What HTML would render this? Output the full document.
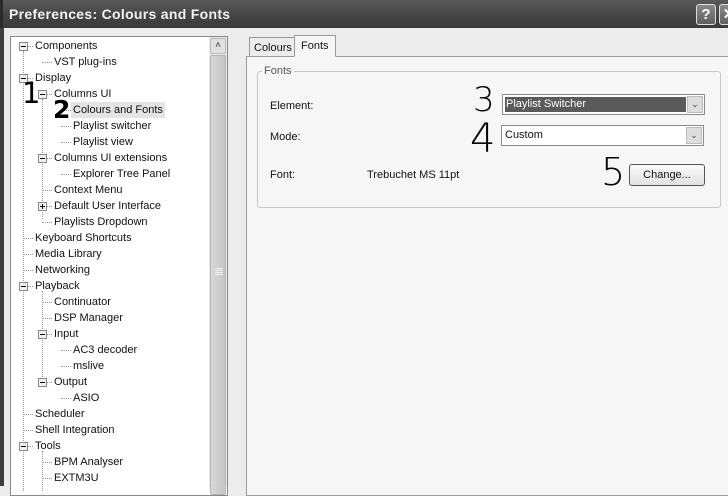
<!DOCTYPE html>
<html><head><meta charset="utf-8"><style>
*{box-sizing:border-box;margin:0;padding:0}
body{width:728px;height:486px;overflow:hidden;background:#ececec;font-family:"Liberation Sans",sans-serif;font-size:11px;color:#111;position:relative}
.title{position:absolute;left:0;top:0;width:728px;height:28px;background:linear-gradient(#5a5a5a,#434343 60%,#3a3a3a);border-left:3px solid #2a2a2a}
.title span{position:absolute;left:6px;top:6px;color:#f2f2f2;font-size:14px;font-weight:bold;letter-spacing:0.3px}
.tb{position:absolute;top:4px;width:20px;height:21px;border:1px solid #ddd;border-radius:3px;background:linear-gradient(#8a8a8a,#5f5f5f);color:#fff;font-weight:bold;font-size:15px;text-align:center;line-height:19px}
.lb{position:absolute;left:0;top:28px;width:4px;height:458px;background:#3e3e3e}
.tree{position:absolute;left:10px;top:36px;width:218px;height:460px;background:#fff;border:1px solid #8a8a8a}
.sb{position:absolute;left:209px;top:37px;width:18px;height:450px;background:#e8e8e8}
.sb .up{position:absolute;left:1px;top:1px;width:16px;height:16px;background:#e0e0e0;border:1px solid #bbb;border-radius:2px;font-size:10px;text-align:center;line-height:14px;color:#333}
.sb .th{position:absolute;left:1px;top:18px;width:16px;height:440px;background:linear-gradient(90deg,#d8d8d8,#c4c4c4);border:1px solid #b5b5b5;border-radius:2px}
.grip{position:absolute;left:4px;top:212px;width:8px;height:1px;background:#eee;box-shadow:0 2px #eee,0 4px #eee,0 6px #eee}
.it{position:absolute;height:16px;line-height:16px;white-space:nowrap}
.box{position:absolute;width:9px;height:9px;border:1px solid #888;background:#f0f0f0}
.box:after{content:"";position:absolute;left:1px;top:3px;width:5px;height:1px;background:#000}
.box.p:before{content:"";position:absolute;left:3px;top:1px;width:1px;height:5px;background:#000}
.vl{position:absolute;width:0;border-left:1px dotted #999}
.hl{position:absolute;height:0;border-top:1px dotted #999}
.panel{position:absolute;left:246px;top:56px;width:490px;height:440px;background:#f6f6f6;border:1px solid #9a9a9a}
.tab{position:absolute;height:20px;border:1px solid #9a9a9a;border-bottom:none;background:#ececec;padding:0 4px;line-height:20px;font-size:11px}
.grp{position:absolute;left:257px;top:71px;width:464px;height:137px;border:1px solid #c8c8c8;border-radius:3px}
.lbl{position:absolute;font-size:11px}
.cb{position:absolute;height:21px;border:1px solid #8a8a8a;background:#fff;line-height:19px;padding-left:3px;font-size:11px}
.arr{position:absolute;right:1px;top:1px;width:16px;height:17px;background:#ddd;border:1px solid #bbb;font-size:9px;text-align:center;line-height:15px;color:#444}
.btn{position:absolute;left:629px;top:164px;width:76px;height:22px;border:1px solid #555;border-radius:3px;background:linear-gradient(#fafafa,#e2e2e2);text-align:center;line-height:20px}
.hw{position:absolute;font-family:"DejaVu Sans",sans-serif;font-weight:200;color:#000}
</style></head><body>
<div class="title"><span>Preferences: Colours and Fonts</span></div>
<div class="tb" style="left:696px">?</div><div class="tb" style="left:719px">✕</div>
<div class="lb"></div>
<div class="tree"></div>
<div id="t"></div>
<div class="sb"><div class="up">˄</div><div class="th"><div class="grip"></div></div></div>

<div class="panel"></div>
<div class="tab" style="left:249px;top:37px;height:19px">Colours</div>
<div class="tab" style="left:294px;top:35px;height:22px;background:#f6f6f6;border-bottom:1px solid #f6f6f6;padding:0 6px">Fonts</div>
<div class="grp"></div>
<div class="lbl" style="left:262px;top:65px;background:#f6f6f6;padding:0 2px;color:#555">Fonts</div>
<div class="lbl" style="left:270px;top:100px">Element:</div>
<div class="lbl" style="left:270px;top:131px">Mode:</div>
<div class="lbl" style="left:270px;top:169px">Font:</div>
<div class="lbl" style="left:367px;top:169px">Trebuchet MS 11pt</div>
<div class="cb" style="left:502px;top:94px;width:203px;background:#fff;padding:2px"><div style="background:#5a5a5a;color:#fff;height:15px;line-height:15px;width:181px;padding-left:1px">Playlist Switcher</div><div class="arr">⌄</div></div>
<div class="cb" style="left:501px;top:125px;width:203px">Custom<div class="arr">⌄</div></div>
<div class="btn">Change...</div>
<div class="hw" style="left:473px;top:80px;font-size:34px">3</div>
<div class="hw" style="left:470px;top:116px;font-size:40px">4</div>
<div class="hw" style="left:601px;top:150px;font-size:38px">5</div>
<div class="hw" style="left:22px;top:76px;font-size:29px;font-weight:normal">1</div>
<div class="hw" style="left:53px;top:95px;font-size:25px;font-weight:bold">2</div>
<script>
var items=[[0,"Components",1],[1,"VST plug-ins"],[0,"Display",1],[1,"Columns UI",1],[2,"Colours and Fonts"],[2,"Playlist switcher"],[2,"Playlist view"],[1,"Columns UI extensions",1],[2,"Explorer Tree Panel"],[1,"Context Menu"],[1,"Default User Interface",2],[1,"Playlists Dropdown"],[0,"Keyboard Shortcuts"],[0,"Media Library"],[0,"Networking"],[0,"Playback",1],[1,"Continuator"],[1,"DSP Manager"],[1,"Input",1],[2,"AC3 decoder"],[2,"mslive"],[1,"Output",1],[2,"ASIO"],[0,"Scheduler"],[0,"Shell Integration"],[0,"Tools",1],[1,"BPM Analyser"],[1,"EXTM3U"]];
var h="";
h+='<div class="vl" style="left:23px;top:51px;height:440px"></div>';
h+='<div class="vl" style="left:42px;top:99px;height:120px"></div>';
h+='<div class="vl" style="left:42px;top:291px;height:90px"></div>';
h+='<div class="vl" style="left:42px;top:451px;height:40px"></div>';
items.forEach(function(it,i){var y=38+i*16,l=it[0],tx=34+l*19,bx=19+l*19;
if(it[2]){h+='<div class="box'+(it[2]==2?' p':'')+'" style="left:'+bx+'px;top:'+(y+4)+'px"></div><div class="hl" style="left:'+(bx+9)+'px;top:'+(y+8)+'px;width:5px"></div>';}
else{h+='<div class="hl" style="left:'+(bx+4)+'px;top:'+(y+8)+'px;width:'+(tx-bx-5)+'px"></div>';}
var sel=it[1]=="Colours and Fonts";
h+='<div class="it" style="left:'+(tx-1)+'px;top:'+y+'px;padding:0 2px;'+(sel?'background:#e4e4e4':'')+'">'+it[1]+'</div>';});
document.getElementById("t").innerHTML=h;
</script>
</body></html>
